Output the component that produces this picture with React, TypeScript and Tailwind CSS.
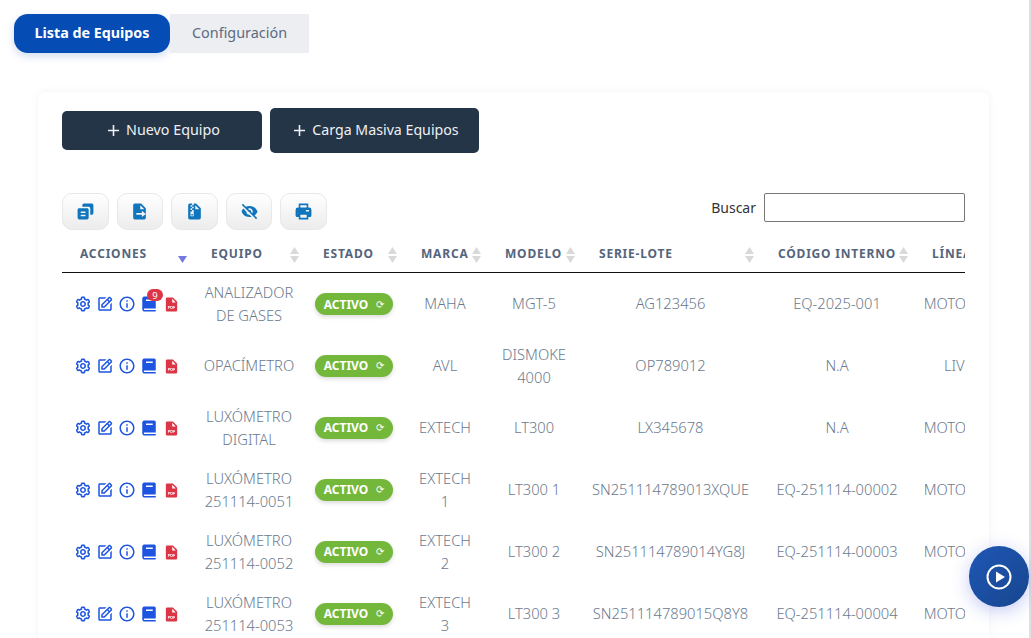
import React from "react";
import { BiCog, BiEdit, BiInfoCircle, BiSolidBook, BiSolidFilePdf, BiSolidCopyAlt, BiSolidFileExport, BiSolidFileArchive, BiSolidHide, BiSolidPrinter, BiPlus } from "react-icons/bi";

const rows = [
  ["ANALIZADOR DE GASES", "MAHA", "MGT-5", "AG123456", "EQ-2025-001", "MOTOCICLETAS"],
  ["OPACÍMETRO", "AVL", "DISMOKE 4000", "OP789012", "N.A", "LIVIANOS"],
  ["LUXÓMETRO DIGITAL", "EXTECH", "LT300", "LX345678", "N.A", "MOTOCICLETAS"],
  ["LUXÓMETRO 251114-0051", "EXTECH 1", "LT300 1", "SN251114789013XQUE", "EQ-251114-00002", "MOTOCICLETAS"],
  ["LUXÓMETRO 251114-0052", "EXTECH 2", "LT300 2", "SN251114789014YG8J", "EQ-251114-00003", "MOTOCICLETAS"],
  ["LUXÓMETRO 251114-0053", "EXTECH 3", "LT300 3", "SN251114789015Q8Y8", "EQ-251114-00004", "MOTOCICLETAS"],
];

const heads = ["ACCIONES", "EQUIPO", "ESTADO", "MARCA", "MODELO", "SERIE-LOTE", "CÓDIGO INTERNO", "LÍNEA"];
const tools = [BiSolidCopyAlt, BiSolidFileExport, BiSolidFileArchive, BiSolidHide, BiSolidPrinter];

function Sort({ active }: { active?: boolean }) {
  return (
    <span className="absolute right-[6px] top-[12px] flex flex-col gap-[2px]">
      <svg width="9" height="7" viewBox="0 0 9 7"><path d="M4.5 0 9 7H0z" fill={active ? "transparent" : "#d9d9d9"} /></svg>
      <svg width="9" height="7" viewBox="0 0 9 7"><path d="M4.5 7 9 0H0z" fill={active ? "#7479e0" : "#d9d9d9"} /></svg>
    </span>
  );
}

export default function App() {
  return (
    <div className="relative h-[638px] w-[1031px] overflow-hidden bg-white font-['Noto_Sans',sans-serif]">
      <div className="flex pl-[14px] pt-[14px]">
        <button className="h-[39px] w-[156px] rounded-[14px] bg-[#054db5] pb-[1px] text-[14.3px] font-bold text-white shadow-[0_3px_8px_rgba(5,77,181,0.2)]">Lista de Equipos</button>
        <button className="h-[39px] w-[139px] bg-[#edeef2] pb-[1px] text-[14.4px] text-[#5b6b80]">Configuración</button>
      </div>
      <div className="ml-[38px] mt-[39px] w-[951px] rounded-[8px] bg-white px-[24px] pt-[16px] shadow-[0_0_10px_rgba(0,0,0,0.05)]">
        <div className="flex h-[45px] items-center gap-[8px]">
          <button className="flex h-[39px] w-[200px] items-center justify-center gap-[3px] rounded-[5px] bg-[#253548] pb-[1px] text-[14.3px] text-[#eef0f3]"><BiPlus size={19} />Nuevo Equipo</button>
          <button className="flex h-[45px] w-[209px] items-center justify-center gap-[3px] rounded-[5px] bg-[#253548] pb-[1px] text-[14.2px] text-[#eef0f3]"><BiPlus size={19} />Carga Masiva Equipos</button>
        </div>
        <div className="mt-[40px] flex items-start justify-between">
          <div className="flex gap-[8px]">
            {tools.map((I, i) => (
              <button key={i} className="flex h-[37px] w-[46.6px] items-center justify-center rounded-[10px] border border-[#e8e8e8] bg-gradient-to-b from-white to-[#ececec] text-[#0f75bc]"><I size={19} /></button>
            ))}
          </div>
          <label className="flex items-center gap-[8px] text-[14px] text-[#333]">
            <span className="pb-[1px]">Buscar</span>
            <input className="h-[29px] w-[201px] rounded-[2px] border border-[#767676] bg-white" />
          </label>
        </div>
        <div className="mt-[5px] w-[903px] overflow-hidden">
          <table className="w-[968px] table-fixed border-collapse">
            <colgroup>
              <col className="w-[131px]" /><col className="w-[112px]" /><col className="w-[98px]" /><col className="w-[84px]" /><col className="w-[94px]" /><col className="w-[179px]" /><col className="w-[154px]" /><col className="w-[116px]" />
            </colgroup>
            <thead>
              <tr className="h-[37px] border-b border-[#111]">
                {heads.map((h, i) => (
                  <th key={h} className="relative pl-[18px] pt-[2px] text-left text-[12px] font-bold tracking-[0.8px] whitespace-nowrap text-[#54657c]">{h}<Sort active={i === 0} /></th>
                ))}
              </tr>
            </thead>
            <tbody>
              {rows.map((r, i) => (
                <tr key={i} className="h-[62px] text-center text-[14.7px] font-light leading-[23px] text-[#6b7a8e]">
                  <td className="pt-[2px]">
                    <div className="flex items-center pl-[10px] text-[#1d55e0]">
                      <span className="flex w-[22px] justify-center"><BiCog size={18} /></span>
                      <span className="flex w-[22px] justify-center"><BiEdit size={18} /></span>
                      <span className="flex w-[22px] justify-center"><BiInfoCircle size={18} /></span>
                      <span className="relative flex w-[22px] justify-center">
                        <BiSolidBook size={18} />
                        {i === 0 && <span className="absolute left-[9px] top-[-6px] flex h-[12px] w-[16px] items-center justify-center rounded-full bg-[#dc3545] text-[9.5px] font-normal text-white">9</span>}
                      </span>
                      <span className="flex w-[22px] justify-center"><BiSolidFilePdf size={17} className="text-[#dc3545]" /></span>
                    </div>
                  </td>
                  <td className="px-[8px] pt-[1px]">{r[0]}</td>
                  <td>
                    <span className="inline-flex h-[22px] w-[78px] items-center justify-center gap-[8px] rounded-full bg-[#73b73b] text-[12px] font-bold text-white shadow-[0_2px_4px_rgba(0,0,0,0.15)]">ACTIVO <span className="text-[10px] font-normal">⟳</span></span>
                  </td>
                  <td className="px-[12px] pt-[1px]">{r[1]}</td>
                  <td className="px-[8px] pt-[1px]">{r[2]}</td>
                  <td className="pt-[1px]">{r[3]}</td>
                  <td className="pt-[1px]">{r[4]}</td>
                  <td className="pl-[8px] pt-[1px] whitespace-nowrap">{r[5]}</td>
                </tr>
              ))}
            </tbody>
          </table>
        </div>
      </div>
      <div className="absolute right-0 top-0 h-full w-[2px] bg-[#e0e0e6]" />
      <button className="absolute left-[969px] top-[546px] flex h-[61px] w-[60px] items-center justify-center rounded-full bg-gradient-to-br from-[#1f57b5] to-[#17468f] shadow-[0_4px_18px_rgba(60,80,220,0.3)]">
        <svg width="26" height="26" viewBox="0 0 26 26"><circle cx="13" cy="13" r="11.5" fill="none" stroke="#fff" strokeWidth="2" /><path d="M10 7.5 19 13l-9 5.5z" fill="#fff" /></svg>
      </button>
    </div>
  );
}
